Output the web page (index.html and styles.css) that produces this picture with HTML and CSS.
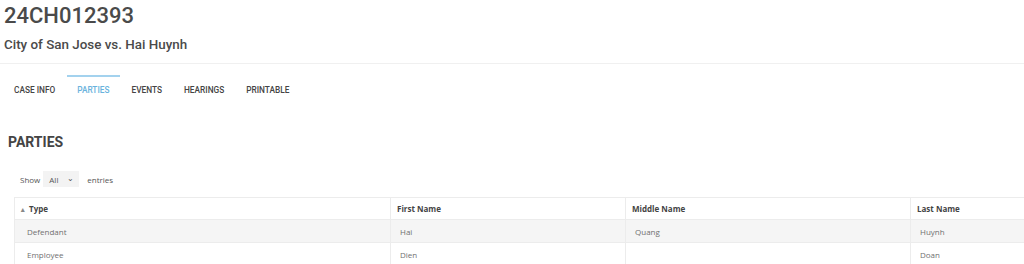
FILE: index.html
```html
<!DOCTYPE html>
<html>
<head>
  <meta charset="UTF-8">
  <title>24CH012393</title>
  <link rel="stylesheet" href="styles.css">
</head>
<body>
  <div class="case-header">
    <h1>24CH012393</h1>
    <h2>City of San Jose vs. Hai Huynh</h2>
  </div>

  <ul class="tabs">
    <li>Case Info</li>
    <li class="active">Parties</li>
    <li>Events</li>
    <li>Hearings</li>
    <li>Printable</li>
  </ul>

  <h3 class="section-title">PARTIES</h3>

  <div class="table-length">
    Show
    <span class="select">All <span class="caret">&#8964;</span></span>
    entries
  </div>

  <table class="parties">
    <thead>
      <tr>
        <th class="col-type"><span class="sort">&#9652;</span> Type</th>
        <th class="col-first">First Name</th>
        <th class="col-middle">Middle Name</th>
        <th class="col-last">Last Name</th>
      </tr>
    </thead>
    <tbody>
      <tr class="odd">
        <td>Defendant</td>
        <td class="pad">Hai</td>
        <td class="pad">Quang</td>
        <td class="pad">Huynh</td>
      </tr>
      <tr>
        <td>Employee</td>
        <td class="pad">Dien</td>
        <td class="pad"></td>
        <td class="pad">Doan</td>
      </tr>
    </tbody>
  </table>
</body>
</html>
```

FILE: styles.css
```css
body {
  margin: 0;
  font-family: Roboto, "Liberation Sans", sans-serif;
  color: #444;
  background: #fff;
  overflow: hidden;
}
.case-header {
  padding: 0 0 0 4px;
  border-bottom: 1px solid #f0f0f0;
  height: 63px;
}
.case-header h1 {
  margin: 0;
  padding-top: 2px;
  font-size: 22px;
  font-weight: 500;
  line-height: 28px;
  color: #4a4a4a;
}
.case-header h2 {
  margin: 6px 0 0;
  font-size: 13.4px;
  font-weight: 500;
  line-height: 18px;
  color: #4a4a4a;
}
.tabs {
  list-style: none;
  margin: 11px 0 0;
  padding: 0 0 0 4px;
  display: flex;
  height: 30px;
}
.tabs li {
  font-size: 8.3px;
  font-weight: 500;
  text-transform: uppercase;
  color: #444;
  padding: 7px 11px 0 10px;
  border-top: 2px solid transparent;
  line-height: 12px;
}
.tabs li + li {
  margin-left: 1px;
}
.tabs li.active {
  color: #6ab3dd;
  border-top-color: #a3d2ee;
}
.section-title {
  margin: 28px 0 0 8px;
  font-size: 14px;
  font-weight: 700;
  line-height: 18px;
  color: #444;
}
.table-length {
  margin: 20px 0 0 20px;
  font-family: "Open Sans", sans-serif;
  font-size: 8px;
  color: #555;
  display: flex;
  align-items: center;
  gap: 3px;
  height: 16px;
}
.select {
  display: inline-flex;
  align-items: center;
  justify-content: space-between;
  background: #f3f3f3;
  width: 25px;
  height: 16px;
  padding: 0 5px 0 6px;
  margin-right: 5px;
  box-sizing: content-box;
}
.caret {
  font-size: 8px;
  line-height: 8px;
  margin-top: -3px;
}
.parties {
  margin: 10px 0 0 14px;
  border-collapse: collapse;
  width: 1100px;
  font-family: "Open Sans", sans-serif;
  font-size: 8px;
  color: #707070;
  table-layout: fixed;
}
.parties th,
.parties td {
  border: 1px solid #ececec;
  text-align: left;
  vertical-align: middle;
}
.parties th {
  font-weight: 700;
  color: #444;
  height: 21px;
  padding: 0 6px;
}
.parties td {
  height: 22px;
  padding: 0 12px;
}
.parties td.pad {
  padding-left: 9px;
}
.parties tr.odd td {
  background: #f5f5f5;
}
.col-type { width: 363px; }
.col-first { width: 222px; }
.col-middle { width: 272px; }
.sort {
  font-size: 7px;
  color: #888;
  margin-right: 2px;
}
```
